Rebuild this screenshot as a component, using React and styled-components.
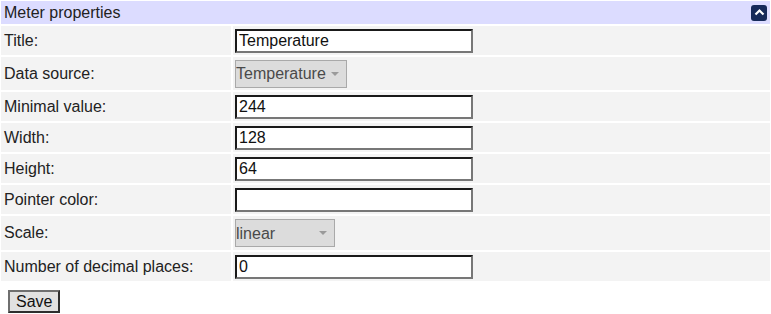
import styled, { createGlobalStyle } from "styled-components";

const GlobalStyle = createGlobalStyle`
  html, body {
    margin: 0;
    padding: 0;
    background: #ffffff;
  }
  body {
    font-family: "Liberation Sans", Arial, sans-serif;
    font-size: 16px;
    color: #222222;
  }
`;

const Panel = styled.section`
  width: 771px;
  padding: 1px 1px 0 1px;
  box-sizing: border-box;
`;

const Header = styled.div`
  display: flex;
  align-items: center;
  justify-content: space-between;
  height: 23px;
  padding: 0 3px 0 3px;
  background: #dcdcff;
`;

const HeaderTitle = styled.span`
  font-size: 16px;
  line-height: 23px;
`;

const CollapseButton = styled.button`
  width: 16px;
  height: 16px;
  padding: 0;
  border: none;
  border-radius: 3px;
  background: #162a5a;
  display: flex;
  align-items: center;
  justify-content: center;
  cursor: pointer;
`;

const Grid = styled.div`
  display: grid;
  grid-template-columns: 230px 1fr;
  column-gap: 2px;
  row-gap: 2px;
  margin-top: 2px;
`;

const LabelCell = styled.div`
  background: #f3f3f3;
  display: flex;
  align-items: center;
  padding: 0 3px;
  height: ${({ $height }) => $height}px;
`;

const ValueCell = styled.div`
  background: #f3f3f3;
  display: flex;
  align-items: center;
  padding: 0 2px;
  height: ${({ $height }) => $height}px;
`;

const TextInput = styled.input`
  box-sizing: border-box;
  width: 238px;
  height: 24px;
  margin: 0;
  padding: 1px 2px;
  font-family: "Liberation Sans", Arial, sans-serif;
  font-size: 16px;
  color: #111111;
  background: #ffffff;
  border-style: solid;
  border-width: 2px;
  border-color: #1a1a1a #777777 #777777 #1a1a1a;
  outline: none;
`;

const SelectWrap = styled.span`
  position: relative;
  display: inline-flex;
  width: ${({ $width }) => $width}px;
  height: 28px;

  &::after {
    content: "";
    position: absolute;
    right: 8px;
    top: 12px;
    border-left: 4px solid transparent;
    border-right: 4px solid transparent;
    border-top: 4px solid #9a9a9a;
    pointer-events: none;
  }
`;

const Select = styled.select`
  appearance: none;
  box-sizing: border-box;
  width: 100%;
  height: 100%;
  margin: 0;
  padding: 0;
  font-family: "Liberation Sans", Arial, sans-serif;
  font-size: 16px;
  color: #4a4a4a;
  background: #dcdcdc;
  border: 1px solid #a9a9a9;
  border-radius: 0;
  opacity: 1;
`;

const Footer = styled.div`
  padding: 9px 8px 0 8px;
`;

const SaveButton = styled.button`
  box-sizing: border-box;
  height: 23px;
  padding: 0 6px;
  font-family: "Liberation Sans", Arial, sans-serif;
  font-size: 16px;
  color: #111111;
  background: #e1e1e1;
  border-style: solid;
  border-width: 2px;
  border-color: #6f6f6f #2e2e2e #2e2e2e #6f6f6f;
  cursor: pointer;
`;

const fields = [
  { label: "Title:", type: "text", value: "Temperature", height: 29 },
  { label: "Data source:", type: "select", value: "Temperature", width: 112, height: 33 },
  { label: "Minimal value:", type: "text", value: "244", height: 29 },
  { label: "Width:", type: "text", value: "128", height: 29 },
  { label: "Height:", type: "text", value: "64", height: 29 },
  { label: "Pointer color:", type: "text", value: "", height: 29 },
  { label: "Scale:", type: "select", value: "linear", width: 100, height: 34 },
  { label: "Number of decimal places:", type: "text", value: "0", height: 29 },
];

function ChevronUp() {
  return (
    <svg width="11" height="11" viewBox="0 0 11 11">
      <path d="M1.5 7.5 L5.5 3.5 L9.5 7.5" fill="none" stroke="#ffffff" strokeWidth="2.2" />
    </svg>
  );
}

function Field({ field }) {
  const isSelect = field.type === "select";
  return (
    <>
      <LabelCell $height={field.height}>{field.label}</LabelCell>
      <ValueCell $height={field.height}>
        {isSelect ? (
          <SelectWrap $width={field.width}>
            <Select disabled defaultValue={field.value}>
              <option value={field.value}>{field.value}</option>
            </Select>
          </SelectWrap>
        ) : (
          <TextInput type="text" defaultValue={field.value} />
        )}
      </ValueCell>
    </>
  );
}

export default function App() {
  return (
    <>
      <GlobalStyle />
      <Panel>
        <Header>
          <HeaderTitle>Meter properties</HeaderTitle>
          <CollapseButton aria-label="Collapse">
            <ChevronUp />
          </CollapseButton>
        </Header>
        <Grid>
          {fields.map((f) => (
            <Field key={f.label} field={f} />
          ))}
        </Grid>
      </Panel>
      <Footer>
        <SaveButton>Save</SaveButton>
      </Footer>
    </>
  );
}
